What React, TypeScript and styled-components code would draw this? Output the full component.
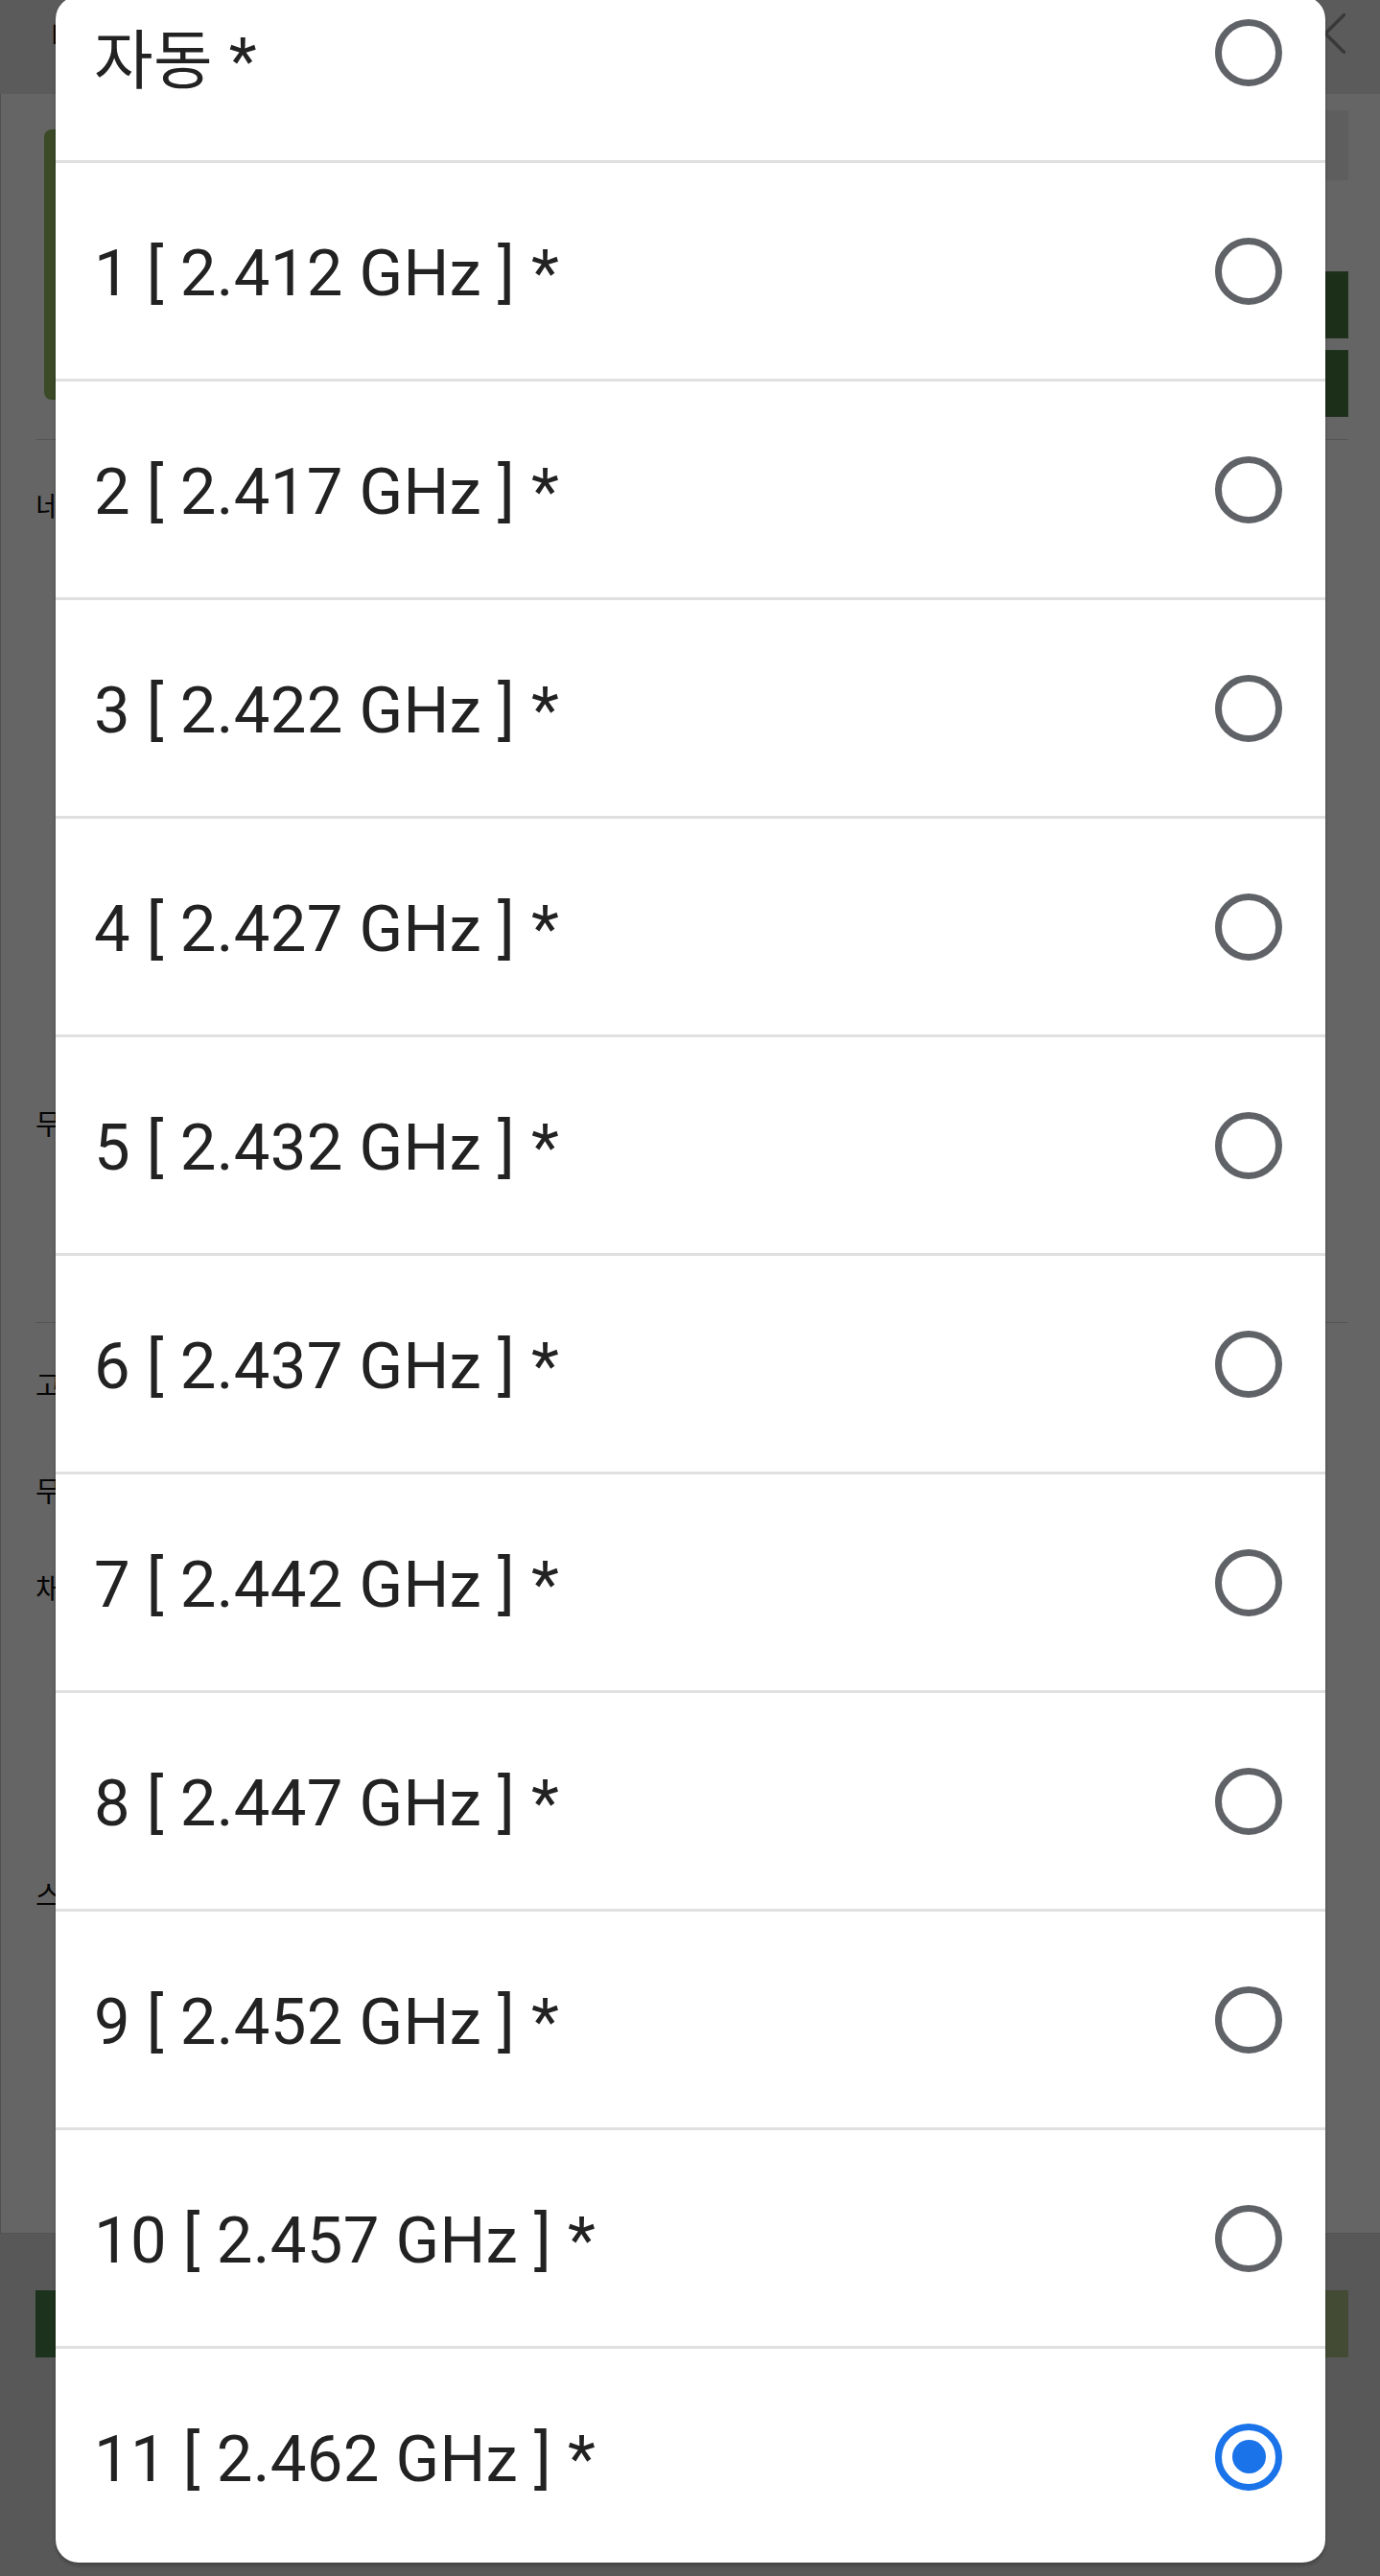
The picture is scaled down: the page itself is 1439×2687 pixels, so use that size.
import React, { useLayoutEffect, useRef } from 'react';
import styled, { createGlobalStyle } from 'styled-components';

const GlobalStyle = createGlobalStyle`
  * {
    box-sizing: border-box;
  }
  html,
  body {
    margin: 0;
    padding: 0;
  }
  body {
    font-family: Roboto, 'Noto Sans CJK KR', sans-serif;
    background: #fcfcfc;
  }
`;

const Page = styled.div`
  width: 1439px;
  height: 2687px;
  display: flex;
  flex-direction: column;
  overflow: hidden;
`;

const Header = styled.header`
  flex: none;
  height: 98px;
  display: flex;
  align-items: flex-start;
  justify-content: space-between;
  padding: 14px 36px 0 53px;
  background: #e3e3e3;
`;

const Title = styled.h1`
  margin: 0;
  font-family: 'Noto Sans CJK KR', sans-serif;
  font-size: 36px;
  line-height: 44px;
  font-weight: 400;
  color: #000;
`;

const CloseButton = styled.button`
  width: 42px;
  height: 42px;
  padding: 0;
  border: none;
  background: none;
  color: #909090;
  display: flex;
  align-items: center;
  justify-content: center;
`;

const Content = styled.main`
  flex: 1;
  background: #fcfcfc;
  border-left: 1px solid #c8c8c8;
  border-bottom: 1px solid #d0d0d0;
  padding: 17px 33px 0 36px;
`;

const TopSection = styled.section`
  height: 320px;
  display: flex;
  align-items: flex-start;
  justify-content: space-between;
`;

const StatusCard = styled.div`
  width: 640px;
  height: 282px;
  margin: 20px 0 0 9px;
  border-radius: 8px;
  background: #93b961;
`;

const SideColumn = styled.div`
  width: 420px;
  display: flex;
  flex-direction: column;
`;

const InputBox = styled.div`
  height: 73px;
  background: #ebebeb;
`;

const ActionButton = styled.div<{ $gap: number }>`
  height: 70px;
  margin-top: ${(p) => p.$gap}px;
  background: #46783f;
  border: 1px solid #5a7f55;
`;

const Divider = styled.hr<{ $gap: number }>`
  margin: ${(p) => p.$gap}px 0 0;
  border: none;
  height: 1px;
  background: #d4d4d4;
`;

const FieldLabel = styled.div<{ $gap: number }>`
  margin-top: ${(p) => p.$gap}px;
  font-family: 'Noto Sans CJK KR', sans-serif;
  font-size: 30px;
  line-height: 40px;
  color: #111;
`;

const BottomBar = styled.footer`
  flex: none;
  height: 357px;
  display: flex;
  gap: 24px;
  padding: 59px 33px 0 37px;
  background: #dcdcdc;
`;

const BarButton = styled.div<{ $tone: 'primary' | 'secondary' }>`
  flex: 1;
  height: 70px;
  background: ${(p) => (p.$tone === 'primary' ? '#467d46' : '#a8bc85')};
`;

const Scrim = styled.div`
  position: fixed;
  inset: 0;
  background: rgba(0, 0, 0, 0.6);
  z-index: 10;
`;

const Dialog = styled.div`
  position: fixed;
  top: -4px;
  left: 58px;
  width: 1324px;
  height: 2677px;
  border-radius: 24px;
  background: #fff;
  overflow: hidden;
  box-shadow: 0 3px 4px rgba(0, 0, 0, 0.25);
  z-index: 11;
`;

const OptionList = styled.div`
  height: 100%;
  overflow-y: auto;
  scrollbar-width: none;
  &::-webkit-scrollbar {
    display: none;
  }
`;

const Option = styled.label`
  height: 228px;
  display: flex;
  align-items: center;
  justify-content: space-between;
  padding: 0 45px 0 40px;
  border-bottom: 3px solid #e0e0e0;
  cursor: pointer;
  &:last-child {
    height: 225px;
    border-bottom: none;
  }
`;

const OptionText = styled.span`
  padding-top: 5px;
  font-family: Roboto, 'Noto Sans CJK KR', sans-serif;
  font-size: 67px;
  letter-spacing: 0.3px;
  color: #222;
`;

const Radio = styled.span<{ $checked: boolean }>`
  flex: none;
  width: 70px;
  height: 70px;
  border-radius: 50%;
  border: 7px solid ${(p) => (p.$checked ? '#1a73e8' : '#5f6368')};
  display: flex;
  align-items: center;
  justify-content: center;
  &::after {
    content: '';
    display: ${(p) => (p.$checked ? 'block' : 'none')};
    width: 35px;
    height: 35px;
    border-radius: 50%;
    background: #1a73e8;
  }
`;

const channels = ['자동 *'].concat(
  Array.from({ length: 11 }, (_, i) => `${i + 1} [ ${(2.412 + i * 0.005).toFixed(3)} GHz ] *`)
);

const fields = [
  { label: '네트워크 이름(SSID)', gap: 47 },
  { label: '무선 보안', gap: 604 },
];

const advanced = [
  { label: '고급 설정', gap: 43 },
  { label: '무선 모드', gap: 70 },
  { label: '채널', gap: 62 },
  { label: '스마트 채널', gap: 280 },
];

const App = (): JSX.Element => {
  const listRef = useRef<HTMLDivElement>(null);
  const selected = 11;

  useLayoutEffect(() => {
    if (listRef.current) listRef.current.scrollTop = 54;
  }, []);

  return (
    <>
      <GlobalStyle />
      <Page>
        <Header>
          <Title>메인 무선 설정</Title>
          <CloseButton aria-label="닫기">
            <svg width="42" height="42" viewBox="0 0 42 42" fill="none" stroke="currentColor" strokeWidth="3.5">
              <path d="M0 0 L42 42 M42 0 L0 42" />
            </svg>
          </CloseButton>
        </Header>
        <Content>
          <TopSection>
            <StatusCard />
            <SideColumn>
              <InputBox />
              <ActionButton $gap={95} />
              <ActionButton $gap={12} />
            </SideColumn>
          </TopSection>
          <Divider $gap={23} />
          {fields.map((f) => (
            <FieldLabel key={f.label} $gap={f.gap}>
              {f.label}
            </FieldLabel>
          ))}
          <Divider $gap={189} />
          {advanced.map((f) => (
            <FieldLabel key={f.label} $gap={f.gap}>
              {f.label}
            </FieldLabel>
          ))}
        </Content>
        <BottomBar>
          <BarButton $tone="primary" />
          <BarButton $tone="secondary" />
        </BottomBar>
      </Page>
      <Scrim />
      <Dialog role="radiogroup">
        <OptionList ref={listRef}>
          {channels.map((c, i) => (
            <Option key={c}>
              <OptionText>{c}</OptionText>
              <Radio role="radio" aria-checked={i === selected} $checked={i === selected} />
            </Option>
          ))}
        </OptionList>
      </Dialog>
    </>
  );
};

export default App;
